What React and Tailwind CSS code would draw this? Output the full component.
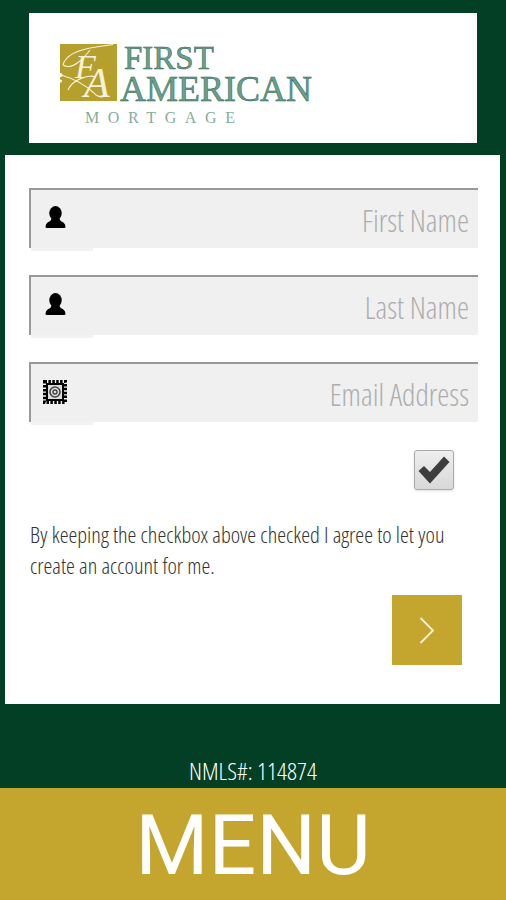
import React from 'react';

const sans = "font-['Open_Sans',sans-serif]";
const serif = "font-['Liberation_Serif',serif]";

const PersonIcon = () => (
    <svg width="21" height="23" viewBox="0 0 22 24" fill="#000">
        <ellipse cx="11" cy="7.500" rx="6.500" ry="7.500" />
        <path d="M7 13 L15 13 Q15.500 15.500 19 17 Q21.500 18.500 21.500 22 Q21.500 23 20 23 L2 23 Q0.500 23 0.500 22 Q0.500 18.500 3 17 Q6.500 15.500 7 13 Z" />
    </svg>
);

const StampIcon = () => (
    <svg width="24" height="24" viewBox="0 0 24 24">
        <rect x="1.500" y="1.500" width="21" height="21" fill="none" stroke="#000" strokeWidth="3" strokeDasharray="2.500 1.400" />
        <rect x="4" y="4" width="16" height="16" fill="#ddd" stroke="#000" strokeWidth="2" />
        <circle cx="12" cy="12" r="5" fill="none" stroke="#444" strokeWidth="1.600" />
        <circle cx="12" cy="12" r="2" fill="none" stroke="#444" strokeWidth="1.400" />
    </svg>
);

const Monogram = () => (
    <svg width="57" height="57" viewBox="0 0 57 57" className="shrink-0">
        <rect width="57" height="57" fill="#b59f2d" />
        <g fill="none" stroke="#f6f1d8" strokeWidth="1.100">
            <path d="M3 21 C6 9 22 5 36 3 L53 0.500" />
            <path d="M3 21 C12 27 24 14 30 6" />
            <path d="M1 31 C8 33 22 38 34 49 C38 54 44 54 46 50" />
            <path d="M8 46 C12 36 28 30 36 33" />
        </g>
        <circle cx="0.500" cy="31" r="2" fill="#fff" />
        <circle cx="0.500" cy="37" r="1.500" fill="#fff" />
        <text x="15" y="34" fontFamily="Liberation Serif" fontStyle="italic" fontSize="34" fill="#f6f1d8">F</text>
        <text x="24" y="53" fontFamily="Liberation Serif" fontStyle="italic" fontSize="42" fill="#f6f1d8">A</text>
    </svg>
);

const Field = ({ icon, label }) => (
    <div className="relative h-[60px] bg-[#f0f0f0] border-t-2 border-l-2 border-[#999] ml-6">
        <div className="absolute left-[12px] top-[16px] flex w-6 justify-center">{icon}</div>
        <div className="absolute left-0 top-[58px] h-[3px] w-[62px] bg-[#f2f2f2]" />
        <div className={`${sans} h-full flex items-center justify-end pr-[9px] pt-[3px] text-[30.5px] font-light text-[#adadad] [font-stretch:75%]`}>{label}</div>
    </div>
);

const App = () => {
    return (
        <div className={`${sans} w-[506px] h-[900px] bg-[#033f24] flex flex-col overflow-hidden`}>
            <div className="mx-[29px] mt-[13px] h-[130px] w-[448px] bg-white pl-[31px] pt-[31px]">
                <div className="flex items-start">
                    <Monogram />
                    <div className={`${serif} text-[#6d9f8b] [-webkit-text-stroke:0.5px_#1f6148] ml-[6px] leading-none`}>
                        <div className="text-[33px] h-[30px] leading-[28px] pl-[1px]">FIRST</div>
                        <div className="text-[36px] h-[28px] leading-[30px] -ml-[3px]">AMERICAN</div>
                    </div>
                </div>
                <div className={`${serif} text-[#86ad9c] text-[16px] leading-none mt-[8px] ml-[25px] tracking-[8.6px]`}>MORTGAGE</div>
            </div>

            <div className="mt-3 ml-[5px] w-[495px] h-[549px] bg-white pt-[33px] pr-[22px] flex flex-col">
                <div className="flex flex-col gap-[27px]">
                    <Field icon={<PersonIcon />} label="First Name" />
                    <Field icon={<PersonIcon />} label="Last Name" />
                    <Field icon={<StampIcon />} label="Email Address" />
                </div>
                <div className="mt-[28px] mr-[24px] self-end w-10 h-10 rounded-[3px] border border-[#aaa] bg-gradient-to-b from-[#eee] to-[#d8d8d8] shadow-sm flex items-center justify-center">
                    <svg width="32" height="28" viewBox="0 0 32 28" fill="#3d3d3d">
                        <path d="M0.500 15 L6 10 L12 16 L26 0.500 L31.500 6 L12 27.500 Z" />
                    </svg>
                </div>
                <p className="mt-[29px] ml-[25px] text-[22.4px] leading-[31px] font-light text-[#333] [font-stretch:75%] whitespace-nowrap">
                    By keeping the checkbox above checked I agree to let you<br />create an account for me.
                </p>
                <button className="mt-[14px] self-end mr-[16px] w-[70px] h-[70px] bg-[#c4a52d] flex items-center justify-center">
                    <svg width="16" height="27" viewBox="0 0 16 27" fill="none" stroke="#f7f1d8" strokeWidth="1.800">
                        <path d="M1.500 1 L14 13.500 L1.500 26" />
                    </svg>
                </button>
            </div>

            <div className="mt-[55px] text-center text-white text-[24.5px] leading-[24px] h-[29px] font-light [font-stretch:75%]">NMLS#: 114874</div>
            <div className="h-[112px] pt-[3px] bg-[#c4a52d] flex items-center justify-center text-white text-[84px] font-['Roboto',sans-serif] font-normal">MENU</div>
        </div>
    );
};

export default App;
